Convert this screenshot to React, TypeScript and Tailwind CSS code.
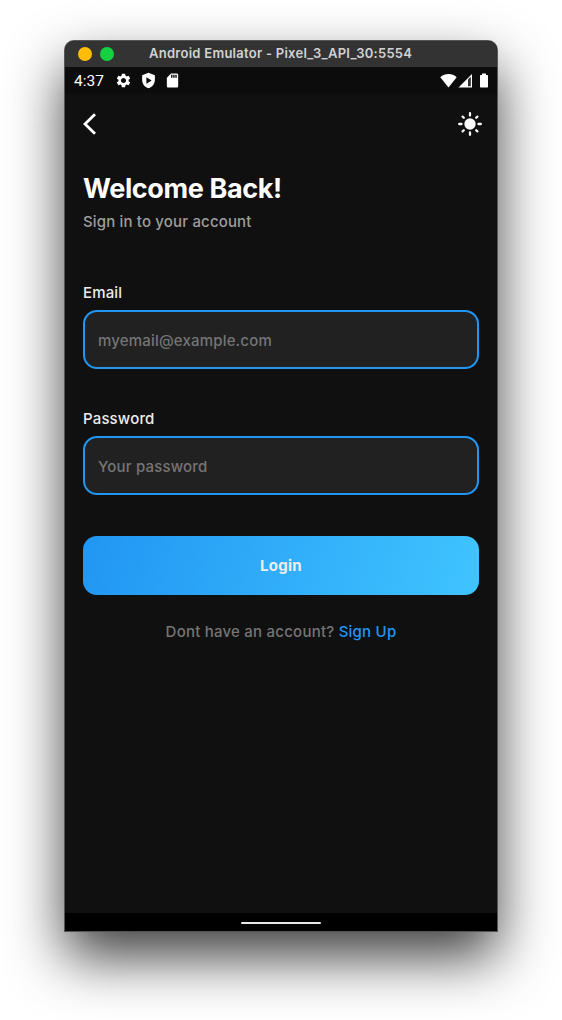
import React from "react";
import { MdSettings, MdSdCard } from "react-icons/md";
import { IoSunny } from "react-icons/io5";

function TitleBar() {
  return (
    <header className="flex h-[26px] items-center bg-[#333333] pl-[13px]">
      <span className="-mt-px mr-2 size-[14px] rounded-full bg-[#ffbd0a]" />
      <span className="-mt-px size-[14px] rounded-full bg-[#15d140]" />
      <h1 className="-mt-[2px] ml-[35px] whitespace-nowrap text-[13px] font-semibold leading-[26px] tracking-[0.27px] text-[#d2d2d2]">
        Android Emulator - Pixel_3_API_30:5554
      </h1>
    </header>
  );
}

function StatusBar() {
  return (
    <div className="flex h-[26px] items-center bg-[#0c0c0c] pl-[9px] pr-[8px] text-white">
      <span className="mt-[2px] w-[41px] font-['Roboto'] text-[15.500px] leading-[26px]">4:37</span>
      <MdSettings className="size-[17px]" />
      <svg className="ml-[7.500px] size-[17px]" viewBox="0 0 24 24" fill="currentColor">
        <path fillRule="evenodd" d="M12 1 3 4.500V11c0 5.600 3.800 10.700 9 12 5.200-1.300 9-6.400 9-12V4.500L12 1Zm-3 6.500 7.500 4.500L9 16.500v-9Z" />
      </svg>
      <MdSdCard className="ml-[7.500px] size-[17px]" />
      <div className="ml-auto flex items-center">
        <svg className="h-[15px] w-[17px]" viewBox="0 0 17 15" fill="currentColor">
          <path d="M.3 4.200C2.600 2.100 5.400 1 8.500 1s5.900 1.100 8.200 3.200L8.500 14.600.3 4.200Z" />
        </svg>
        <svg className="ml-[1px] h-[15px] w-[15px]" viewBox="0 0 15 15">
          <path d="M14 1v13.500H.500L14 1Z" fill="#fff" />
          <path d="M10 6.500 12.800 3.700v9.500H10V6.500Z" fill="#303030" />
        </svg>
        <svg className="ml-[6px] h-[15px] w-[10px]" viewBox="0 0 10 15" fill="currentColor">
          <path d="M3 .5h4V2h1.400c.4 0 .6.3.6.700v11.100c0 .4-.2.700-.6.700H1.600c-.4 0-.6-.3-.6-.7V2.700c0-.4.200-.7.600-.7H3V.5Z" />
        </svg>
      </div>
    </div>
  );
}

function Field({ label, type, placeholder }: { label: string; type: string; placeholder: string }) {
  return (
    <label className="block">
      <span className="block text-[15px] font-medium leading-[18px] tracking-[0.15px] text-[#ececec]">{label}</span>
      <input
        type={type}
        placeholder={placeholder}
        className="mt-[8px] block h-[59px] w-full rounded-[14px] border-2 border-[#2196f3] bg-[#212121] px-[13px] pt-[2px] text-[15px] font-medium tracking-[0.18px] text-white outline-none placeholder:text-[#757575]"
      />
    </label>
  );
}

export default function App() {
  return (
    <div className="h-[1020px] w-[562px] overflow-hidden bg-white pl-[65px] pt-[41px] font-['Inter',sans-serif]">
      <div className="flex h-[890px] w-[432px] flex-col overflow-hidden rounded-t-[9px] bg-[#101010] shadow-[0_0_0_1px_#555555,0_26px_56px_rgba(0,0,0,0.76)]">
        <TitleBar />
        <StatusBar />
        <main className="flex-1 px-[18px]">
          <div className="flex h-[62px] items-center justify-between">
            <button aria-label="Back" className="-ml-[0.500px]">
              <svg className="h-[24px] w-[14px]" viewBox="0 0 14 24" fill="none" stroke="#fff" strokeWidth="2.800">
                <path d="M12 2.300 2 12l10 9.700" />
              </svg>
            </button>
            <button aria-label="Theme" className="-mr-[4px] text-[#fafafa]">
              <svg className="size-[26px]" viewBox="0 0 26 26" fill="none" stroke="currentColor" strokeWidth="2.300" strokeLinecap="round">
                <circle cx="13" cy="13" r="5.700" fill="currentColor" stroke="none" />
                <path d="M13 2.200v2.300M13 21.500v2.300M2.200 13h2.300M21.500 13h2.300M5.600 5.600l1.200 1.200M19.200 19.200l1.200 1.200M5.600 20.400l1.200-1.200M19.200 6.800l1.200-1.200" />
              </svg>
            </button>
          </div>
          <h2 className="mt-[16px] whitespace-nowrap text-[27px] font-bold leading-[36px] tracking-[-0.4px] text-white">Welcome Back!</h2>
          <p className="mt-[5px] text-[15px] font-medium leading-[20px] tracking-[0.160px] text-[#9e9e9e]">Sign in to your account</p>
          <form className="mt-[52px]" onSubmit={(e) => e.preventDefault()}>
            <div className="flex flex-col gap-[41px]">
              <Field label="Email" type="email" placeholder="myemail@example.com" />
              <Field label="Password" type="password" placeholder="Your password" />
            </div>
            <button className="mt-[41px] block h-[59px] w-full rounded-[14px] bg-[linear-gradient(105deg,#2196f3,#40c4ff)] pt-px text-[15px] font-bold tracking-[0.250px] text-[#eeeeee]">
              Login
            </button>
          </form>
          <p className="mt-[27px] whitespace-nowrap text-center text-[15px] font-medium leading-[20px] tracking-[0.230px] text-[#757575]">
            Dont have an account? <a className="text-[#2196f3]">Sign Up</a>
          </p>
        </main>
        <div className="flex h-[18px] items-center justify-center bg-black">
          <span className="mt-px h-[2px] w-[80px] rounded-full bg-[#e9e9e9]" />
        </div>
      </div>
    </div>
  );
}
